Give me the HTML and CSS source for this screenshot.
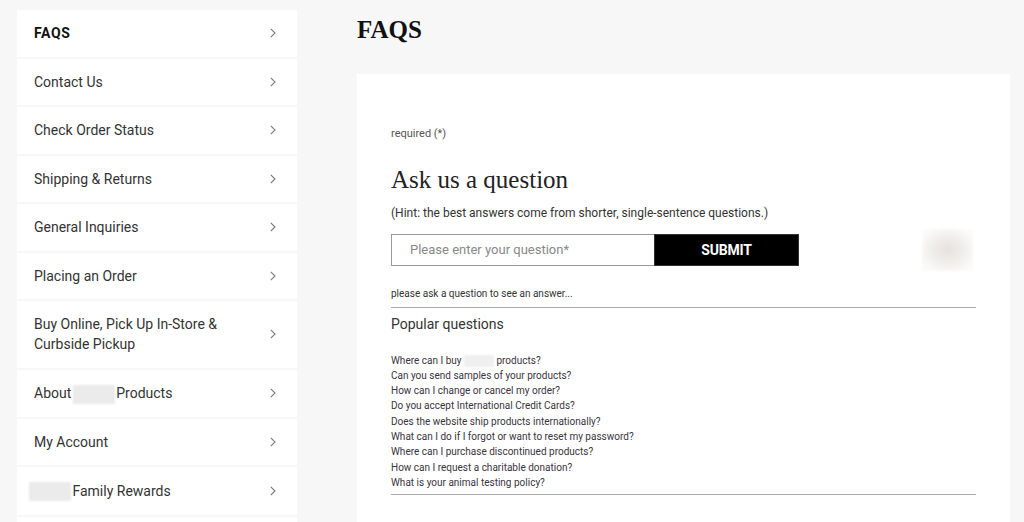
FILE: index.html
```html
<!DOCTYPE html>
<html lang="en">
<head>
<meta charset="utf-8">
<title>FAQS</title>
<link rel="stylesheet" href="styles.css">
</head>
<body>
<div class="page">
  <nav class="sidebar">
    <a class="nav-item active" href="#"><span>FAQS</span><svg class="chev" viewBox="0 0 6 10"><polyline points="0.8,0.8 5,5 0.8,9.2"/></svg></a>
    <a class="nav-item" href="#"><span>Contact Us</span><svg class="chev" viewBox="0 0 6 10"><polyline points="0.8,0.8 5,5 0.8,9.2"/></svg></a>
    <a class="nav-item" href="#"><span>Check Order Status</span><svg class="chev" viewBox="0 0 6 10"><polyline points="0.8,0.8 5,5 0.8,9.2"/></svg></a>
    <a class="nav-item" href="#"><span>Shipping &amp; Returns</span><svg class="chev" viewBox="0 0 6 10"><polyline points="0.8,0.8 5,5 0.8,9.2"/></svg></a>
    <a class="nav-item" href="#"><span>General Inquiries</span><svg class="chev" viewBox="0 0 6 10"><polyline points="0.8,0.8 5,5 0.8,9.2"/></svg></a>
    <a class="nav-item" href="#"><span>Placing an Order</span><svg class="chev" viewBox="0 0 6 10"><polyline points="0.8,0.8 5,5 0.8,9.2"/></svg></a>
    <a class="nav-item" href="#"><span>Buy Online, Pick Up In-Store &amp;<br>Curbside Pickup</span><svg class="chev" viewBox="0 0 6 10"><polyline points="0.8,0.8 5,5 0.8,9.2"/></svg></a>
    <a class="nav-item" href="#"><span>About <i class="blur"></i> Products</span><svg class="chev" viewBox="0 0 6 10"><polyline points="0.8,0.8 5,5 0.8,9.2"/></svg></a>
    <a class="nav-item" href="#"><span>My Account</span><svg class="chev" viewBox="0 0 6 10"><polyline points="0.8,0.8 5,5 0.8,9.2"/></svg></a>
    <a class="nav-item" href="#"><span class="pull"><i class="blur"></i> Family Rewards</span><svg class="chev" viewBox="0 0 6 10"><polyline points="0.8,0.8 5,5 0.8,9.2"/></svg></a>
    <div class="nav-item nav-more"></div>
  </nav>

  <main class="main">
    <h1 class="title">FAQS</h1>
    <section class="card">
      <p class="required">required (*)</p>
      <h2 class="ask">Ask us a question</h2>
      <p class="hint">(Hint: the best answers come from shorter, single-sentence questions.)</p>
      <div class="ask-row">
        <div class="field">Please enter your question*</div>
        <button class="submit" type="button">SUBMIT</button>
        <div class="avatar"></div>
      </div>
      <p class="answer">please ask a question to see an answer...</p>
      <h3 class="popular">Popular questions</h3>
      <ul class="questions">
        <li>Where can I buy <i class="blur small"></i> products?</li>
        <li>Can you send samples of your products?</li>
        <li>How can I change or cancel my order?</li>
        <li>Do you accept International Credit Cards?</li>
        <li>Does the website ship products internationally?</li>
        <li>What can I do if I forgot or want to reset my password?</li>
        <li>Where can I purchase discontinued products?</li>
        <li>How can I request a charitable donation?</li>
        <li>What is your animal testing policy?</li>
      </ul>
    </section>
  </main>
</div>
</body>
</html>
```

FILE: styles.css
```css
* { box-sizing: border-box; }
html, body { margin: 0; padding: 0; height: 100%; overflow: hidden; }
body {
  background: #f7f7f7;
  font-family: Roboto, "Liberation Sans", Arial, sans-serif;
  color: #333;
}
.page {
  display: flex;
  align-items: flex-start;
  padding: 10px 0 0 17px;
  gap: 60px;
}
.sidebar {
  width: 280px;
  flex: none;
  display: flex;
  flex-direction: column;
  gap: 2px;
}
.nav-item {
  display: flex;
  align-items: center;
  justify-content: space-between;
  background: #fff;
  padding: 13.25px 21px 13.25px 17px;
  font-size: 14px;
  line-height: 20px;
  color: #333;
  text-decoration: none;
}
.nav-more { height: 46px; }
.nav-item.active span {
  font-weight: 700;
  color: #111;
  letter-spacing: 0.6px;
}
.chev {
  width: 6px;
  height: 10px;
  flex: none;
  fill: none;
  stroke: #7a7a7a;
  stroke-width: 1.1;
}
.blur {
  display: inline-block;
  width: 42px;
  height: 19px;
  vertical-align: middle;
  background: #ebebeb;
  filter: blur(1.2px);
  margin: 0 -2px;
}
.blur.small {
  width: 30px;
  height: 12px;
  background: #efefef;
  margin: 0;
}
.pull { margin-left: -3px; }

.main {
  flex: 1;
  padding-right: 14px;
}
.title {
  margin: 0;
  padding-top: 5px;
  height: 64px;
  font-family: "Liberation Serif", "Times New Roman", serif;
  font-weight: 700;
  font-size: 25px;
  line-height: 30px;
  color: #111;
}
.card {
  background: #fff;
  padding: 52px 34px 40px 34px;
  min-height: 460px;
}
.required {
  margin: 0;
  font-size: 11px;
  line-height: 16px;
  color: #555;
}
.ask {
  margin: 22.5px 0 0;
  font-family: "Liberation Serif", "Times New Roman", serif;
  font-weight: 400;
  font-size: 25px;
  line-height: 30px;
  color: #222;
}
.hint {
  margin: 10.5px 0 0;
  font-size: 12px;
  line-height: 16px;
  color: #333;
}
.ask-row {
  margin-top: 13px;
  display: flex;
  align-items: center;
  height: 32px;
}
.field {
  width: 263px;
  height: 32px;
  border: 1px solid #9a9a9a;
  border-right: none;
  padding-left: 18px;
  font-size: 13px;
  line-height: 30px;
  color: #888;
}
.submit {
  width: 145px;
  height: 32px;
  background: #000;
  color: #fff;
  border: 1px solid #333;
  font-family: Roboto, "Liberation Sans", sans-serif;
  font-weight: 700;
  font-size: 14px;
  letter-spacing: -0.2px;
  padding: 0;
}
.avatar {
  margin-left: auto;
  margin-right: 3px;
  width: 51px;
  height: 42px;
  background: radial-gradient(ellipse at 50% 50%, #e6e3dd 0%, #efede9 40%, #fafafa 80%, #fcfcfc 100%);
  filter: blur(1px);
}
.answer {
  margin: 21px 0 0;
  font-size: 10px;
  line-height: 14px;
  color: #333;
  padding-bottom: 6px;
  border-bottom: 1.5px solid #ababab;
}
.popular {
  margin: 7px 0 0;
  font-weight: 400;
  font-size: 14px;
  line-height: 18px;
  color: #333;
}
.questions {
  list-style: none;
  margin: 19.5px 0 0;
  padding: 0 0 4px;
  border-bottom: 1.5px solid #ababab;
  font-size: 10px;
  line-height: 15.3px;
  color: #3a3340;
}
.questions li { white-space: nowrap; }
```
